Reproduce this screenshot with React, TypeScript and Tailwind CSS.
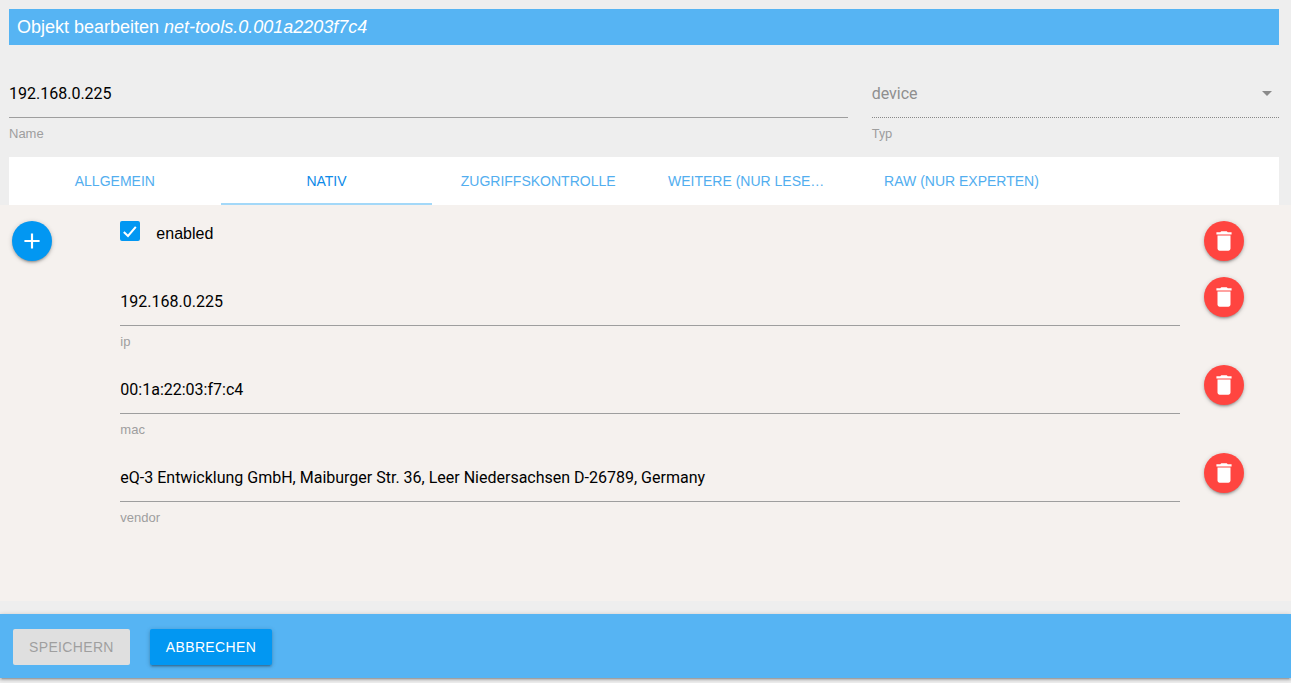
import { useState } from "react";
import { MdAdd, MdDelete } from "react-icons/md";
import clsx from "clsx";

const tabs = [
  { id: "common", label: "Allgemein" },
  { id: "native", label: "Nativ" },
  { id: "acl", label: "Zugriffskontrolle" },
  { id: "more", label: "Weitere (nur lesend)" },
  { id: "raw", label: "Raw (nur Experten)" },
];

const initialFields = [
  { id: "ip", value: "192.168.0.225" },
  { id: "mac", value: "00:1a:22:03:f7:c4" },
  { id: "vendor", value: "eQ-3 Entwicklung GmbH, Maiburger Str. 36, Leer Niedersachsen D-26789, Germany" },
];

const depth = "shadow-[0_2px_2px_0_rgba(0,0,0,0.14),0_3px_1px_-2px_rgba(0,0,0,0.12),0_1px_5px_0_rgba(0,0,0,0.2)]";

function TextField({ id, label, value }: { id: string; label: string; value: string }) {
  return (
    <div className="flex flex-col">
      <input
        id={id}
        type="text"
        defaultValue={value}
        className="h-[49px] w-full border-b border-[#9e9e9e] bg-transparent font-[Roboto,sans-serif] text-base text-black outline-none focus:border-[#0297f2]"
      />
      <label htmlFor={id} className="mt-2 text-[13px] leading-[15px] text-[#9e9e9e]">
        {label}
      </label>
    </div>
  );
}

function RoundButton({ label, color, children }: { label: string; color: string; children: React.ReactNode }) {
  return (
    <button
      type="button"
      aria-label={label}
      className={clsx("flex h-10 w-10 items-center justify-center rounded-full text-white", depth, color)}
    >
      {children}
    </button>
  );
}

function DeleteButton({ name }: { name: string }) {
  return (
    <RoundButton label={`${name} löschen`} color="bg-[#ff4540]">
      <MdDelete size={26} />
    </RoundButton>
  );
}

export default function App() {
  const [active, setActive] = useState("native");

  return (
    <div className="flex min-h-screen flex-col bg-[#eeeeee] pt-[9px] font-['Liberation_Sans',Arial,sans-serif]">
      <div className="pr-3 pl-[9px]">
        {/* Title */}
        <h1 className="bg-[#56b4f3] px-2 text-lg leading-9 text-white">
          Objekt bearbeiten <i>net-tools.0.001a2203f7c4</i>
        </h1>

        {/* Name and type */}
        <div className="mt-6 grid grid-cols-12 gap-x-6">
          <div className="col-span-8">
            <TextField id="name" label="Name" value="192.168.0.225" />
          </div>
          <div className="col-span-4 flex flex-col">
            <div className="relative">
              <select
                id="type"
                disabled
                defaultValue="device"
                className="block h-[49px] w-full appearance-none border-b border-dotted border-[#888888] bg-transparent pt-0.5 font-[Roboto,sans-serif] text-base text-[#8f8f8f]"
              >
                <option value="device">device</option>
              </select>
              <svg viewBox="0 0 10 5" className="pointer-events-none absolute top-[22px] right-[7px] h-[5px] w-[10px] fill-[#8a8a8a]">
                <path d="M0 0h10L5 5z" />
              </svg>
            </div>
            <label htmlFor="type" className="mt-2 font-[Roboto,sans-serif] text-[13px] leading-[15px] text-[#9e9e9e]">
              Typ
            </label>
          </div>
        </div>

        {/* Tabs */}
        <div role="tablist" className="mt-4 grid grid-cols-6 bg-white">
          {tabs.map((tab) => (
            <button
              key={tab.id}
              type="button"
              role="tab"
              aria-selected={active === tab.id}
              onClick={() => setActive(tab.id)}
              className={clsx(
                "h-12 truncate border-b-2 px-6 pt-0.5 text-sm uppercase",
                active === tab.id ? "border-[#a3d8f8] text-[#0d8ae8]" : "border-transparent text-[#52aeef]"
              )}
            >
              {tab.label}
            </button>
          ))}
        </div>
      </div>

      {/* Native attributes */}
      <main className="grow bg-[#f5f1ee] pt-4 pr-[3px] pb-16 pl-3">
        <div className="grid grid-cols-12 gap-x-6">
          <div>
            <RoundButton label="Hinzufügen" color="bg-[#0297f2]">
              <MdAdd size={26} />
            </RoundButton>
          </div>
          <div className="col-span-10 flex">
            <div className="relative h-5 w-5">
              <input
                id="enabled"
                type="checkbox"
                defaultChecked
                className="peer block h-5 w-5 appearance-none rounded-xs border-2 border-[#5a5a5a] checked:border-[#0297f2] checked:bg-[#0297f2]"
              />
              <svg
                viewBox="0 0 20 20"
                className="pointer-events-none absolute inset-0 hidden h-5 w-5 fill-none stroke-white stroke-2 peer-checked:block"
              >
                <path d="M3.800 11l4.200 4L15.800 5.800" />
              </svg>
            </div>
            <label htmlFor="enabled" className="pl-4 text-base leading-[26px] text-black">
              enabled
            </label>
          </div>
          <DeleteButton name="enabled" />
        </div>

        {initialFields.map((field) => (
          <div key={field.id} className="mt-4 grid grid-cols-12 items-start gap-x-6">
            <div className="col-span-10 col-start-2">
              <TextField id={field.id} label={field.id} value={field.value} />
            </div>
            <DeleteButton name={field.id} />
          </div>
        ))}
      </main>

      <footer className={clsx("mt-[13px] mb-[5px] flex h-16 items-center gap-5 bg-[#56b4f3] pt-0.5 pl-[13px]", depth)}>
        <button type="button" disabled className="h-9 rounded-xs bg-[#dfdfdf] px-4 text-sm tracking-wide text-[#9f9f9f] uppercase">
          Speichern
        </button>
        <button type="button" className={clsx("h-9 rounded-xs bg-[#0297f2] px-4 text-sm tracking-wide text-white uppercase", depth)}>
          Abbrechen
        </button>
      </footer>
    </div>
  );
}
